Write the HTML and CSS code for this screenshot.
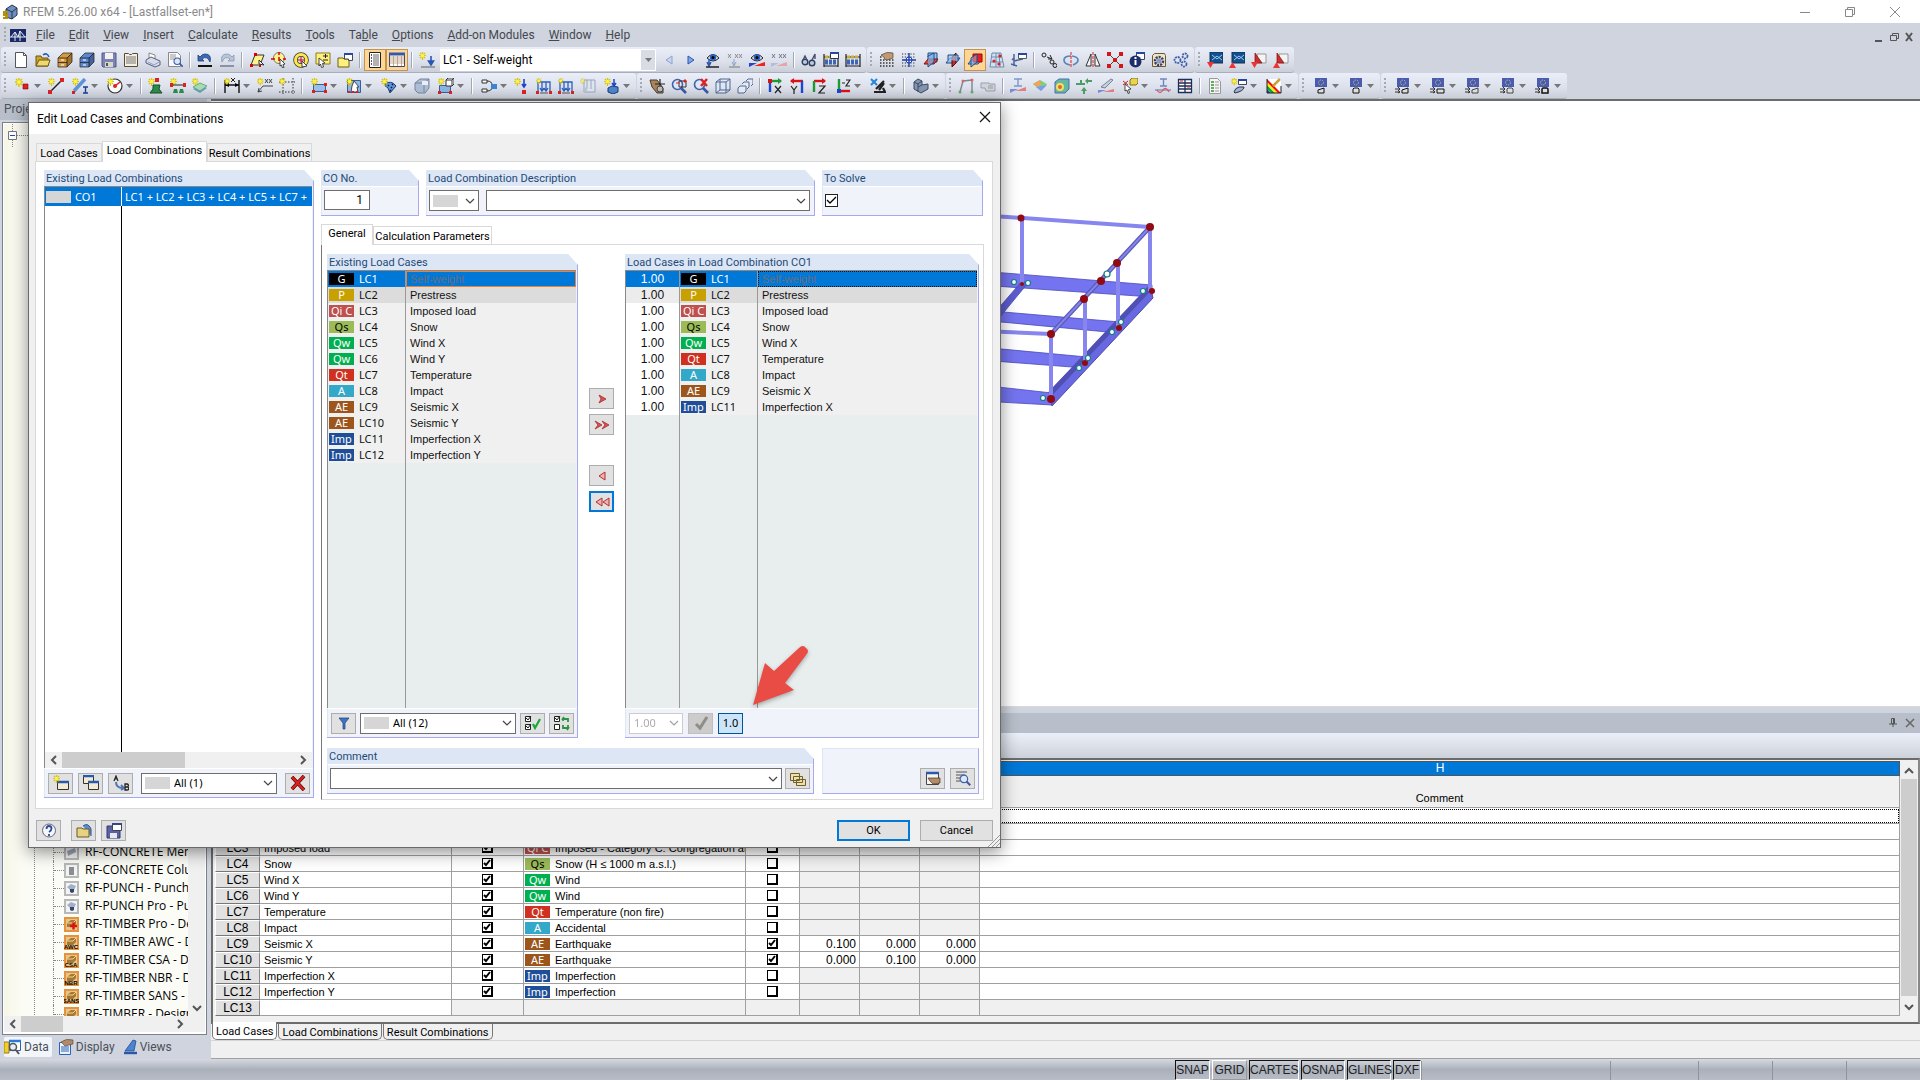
FILE: index.html
```
<!DOCTYPE html>
<html lang="en">
<head>
<meta charset="utf-8">
<title>RFEM 5.26.00 x64 - [Lastfallset-en*]</title>
<link rel="stylesheet" href="styles.css">
</head>
<body>
<svg class="defs" aria-hidden="true">
  <symbol id="star" viewBox="0 0 16 16"><path d="M4 0v9M0 4h8M1 1l6 6M7 1l-6 6" stroke="#d8c400" stroke-width="1.4"/><circle cx="4" cy="4" r="2" fill="#fff34a"/></symbol>
  <symbol id="arr" viewBox="0 0 7 4"><path d="M0 0h7L3.500 4z" fill="#777"/></symbol>
  <symbol id="chev" viewBox="0 0 10 6"><path d="M1 1l4 4 4-4" fill="none" stroke="#444" stroke-width="1.200"/></symbol>
  <symbol id="chevL" viewBox="0 0 8 10"><path d="M6 1L2 5l4 4" fill="none" stroke="#555" stroke-width="2"/></symbol>
  <symbol id="chevR" viewBox="0 0 8 10"><path d="M2 1l4 4-4 4" fill="none" stroke="#555" stroke-width="2"/></symbol>
  <symbol id="chevU" viewBox="0 0 10 8"><path d="M1 6l4-4 4 4" fill="none" stroke="#555" stroke-width="2"/></symbol>
  <symbol id="chevD" viewBox="0 0 10 8"><path d="M1 2l4 4 4-4" fill="none" stroke="#555" stroke-width="2"/></symbol>
  <symbol id="cabinet" viewBox="0 0 16 16"><path d="M1 6l5-5h9v9l-5 5H1z" fill="currentColor" stroke="#333" stroke-width=".8"/><path d="M1 6h9v9M10 6l5-5M1 10.500h9" fill="none" stroke="#222" stroke-width=".8"/><path d="M10 6l5-5v9l-5 5z" fill="#000" opacity=".25"/><path d="M4 8h3M4 13h3" stroke="#fff" stroke-width="1.200"/></symbol>
  <symbol id="plane" viewBox="0 0 16 16"><path d="M1 9l4-4h10l-4 5z" fill="#9cc4ee" stroke="#1c4c8c"/><path d="M5 12V5l6-4v8z" fill="#7fb0e6" stroke="#1c4c8c"/></symbol>
  <symbol id="lens" viewBox="0 0 16 16"><circle cx="6.500" cy="6.500" r="5" fill="#dce8fa" stroke="#4060a8" stroke-width="1.600"/><path d="M10 10l5 5" stroke="#3a58a8" stroke-width="2.600"/></symbol>
  <symbol id="eye" viewBox="0 0 16 16"><path d="M2 6q6-7 12 0-6 6-12 0z" fill="#dce6f4" stroke="#222"/><circle cx="8" cy="5.500" r="3.200" fill="#2c64c0"/><circle cx="8" cy="5.500" r="1.500" fill="#000"/></symbol>
  <symbol id="loadframe" viewBox="0 0 16 16"><path d="M2 14V4h12v10M6 4v8M10 4v8M4 10l2 3 2-3M8 10l2 3 2-3" fill="none" stroke="#2b60c0" stroke-width="1.300"/><path d="M4 15h8" stroke="#555"/><path d="M0 13h3v3H0zM13 13h3v3h-3z" fill="#d22"/></symbol>
  <symbol id="abacus" viewBox="0 0 16 16"><path d="M1 2v13M15 2v13M1 14h14M1 5h14" stroke="#222" stroke-width="1.200"/><path d="M2 10h12" stroke="#3c66bc" stroke-width="5" stroke-dasharray="3 1"/><path d="M2 5h12" stroke="#c9ae3a" stroke-width="3" stroke-dasharray="3 1"/></symbol>
  <symbol id="screen" viewBox="0 0 16 16"><path d="M2 0h12v9H2z" fill="#4b5cb0"/><circle cx="8" cy="4.500" r="2.500" fill="none" stroke="#b3b98a" stroke-dasharray="1.500 1"/></symbol>
  <symbol id="modwin" viewBox="0 0 16 16"><path d="M3 0h13v11H3z" fill="#14508c" stroke="#0c3058"/><path d="M5 3l5 4 5-4M5 8l5-4 5 4" stroke="#9cc8ee" fill="none"/></symbol>
  <symbol id="addin" viewBox="0 0 16 16"><path d="M6 2h9v9H6z" fill="#f4f4f4" stroke="#999"/><path d="M4 1l7 10H4z" fill="#d02c2c" stroke="#801010" stroke-width=".7"/></symbol>
  <symbol id="wind" viewBox="0 0 16 16"><path d="M0 11h5M0 14h5M3 9l2 2-2 2M3 12l2 2-2 1" stroke="#333" fill="none"/></symbol>
  <symbol id="tb-box" viewBox="0 0 15 15"><path d="M1 1h13v13H1z" fill="#e3c590" stroke="#e6923a" stroke-width="2"/><path d="M3 6l4-3h5v4l-3 3H3z" fill="#a8772c"/><path d="M3 6h6l3-3" stroke="#f1d69c" fill="none"/></symbol>
  <symbol id="gy-box" viewBox="0 0 15 15"><path d="M1 1h13v13H1z" fill="#f3f3f3" stroke="#b8b8b8" stroke-width="2"/></symbol>
</svg>

<div class="app">
<header class="titlebar">
  <svg width="16" height="16" viewBox="0 0 16 16"><path d="M4 5l6-4 5 3v7l-5 4-6-2z" fill="#6f8fc0" stroke="#26364f"/><path d="M4 5l6 3v7M10 8l5-4" fill="none" stroke="#26364f"/><path d="M6 8H2v3h3v3H1" fill="none" stroke="#b98e00" stroke-width="2"/></svg>
  <h1>RFEM 5.26.00 x64 - [Lastfallset-en*]</h1>
  <div class="winctl">
    <button><svg width="12" height="12"><path d="M1 6.500h10" stroke="#888"/></svg></button>
    <button><svg width="12" height="12"><path d="M1.500 3.500h7v7h-7zM3.500 3.500v-2h7v7h-2" fill="none" stroke="#888"/></svg></button>
    <button><svg width="12" height="12"><path d="M1 1l10 10M11 1L1 11" stroke="#888"/></svg></button>
  </div>
</header>

<nav class="menubar">
  <i class="grip"></i>
  <svg class="logo" width="16" height="13" viewBox="0 0 16 13"><path d="M0 0h16v13H0z" fill="#1a2a66"/><path d="M0 8h16M1 8l4-5 3 5 2-6 5 6M5 3v9M10 2v10" stroke="#e6ebf7" fill="none"/></svg>
  <a href="#"><u>F</u>ile</a><a href="#"><u>E</u>dit</a><a href="#"><u>V</u>iew</a><a href="#"><u>I</u>nsert</a><a href="#"><u>C</u>alculate</a><a href="#"><u>R</u>esults</a><a href="#"><u>T</u>ools</a><a href="#">Ta<u>b</u>le</a><a href="#"><u>O</u>ptions</a><a href="#"><u>A</u>dd-on Modules</a><a href="#"><u>W</u>indow</a><a href="#"><u>H</u>elp</a>
  <div class="mdictl">
    <svg width="40" height="12" viewBox="0 0 40 12"><path d="M1 10h7" stroke="#555" stroke-width="2"/><path d="M16.500 4.500h6v5h-6zM18.500 4.500v-2h6v5h-2" fill="none" stroke="#555"/><path d="M32 2l6 8M38 2l-6 8" stroke="#555" stroke-width="2"/></svg>
  </div>
</nav>

<div class="toolrow">
 <div class="bar"><i class="grip"></i>
  <button><svg viewBox="0 0 16 16"><path d="M2.500.500h8l3 3v12h-11z" fill="#fff" stroke="#555"/><path d="M10.500.500v3h3" fill="none" stroke="#555"/></svg></button>
  <button><svg viewBox="0 0 16 16"><path d="M1 14V4h5l1 2h6v8z" fill="#c9a52c" stroke="#6b5610"/><path d="M1 14l3-6h11l-2 6z" fill="#f0d870" stroke="#6b5610"/><path d="M8 3q4-3 6 2" stroke="#2a5ab0" fill="none" stroke-width="1.500"/></svg></button>
  <button><svg viewBox="0 0 16 16" color="#d69a3c"><use href="#cabinet"/></svg></button>
  <button><svg viewBox="0 0 16 16" color="#5b86d4"><use href="#cabinet"/></svg></button>
  <button><svg viewBox="0 0 16 16"><path d="M1 1h14v14H2l-1-1z" fill="#7d84b4" stroke="#55598a"/><path d="M4 1h8v6H4z" fill="#f2f2f2"/><path d="M4 10h8v5H4z" fill="#d4d8c8"/><path d="M6 11v3" stroke="#555" stroke-width="2"/></svg></button>
  <button><svg viewBox="0 0 16 16"><path d="M1.500 1.500h4l1 1h2l1-1h5v13h-13z" fill="#f4efe2" stroke="#5c4a30"/><path d="M3 5h10M3 7h10M3 9h10M3 11h10" stroke="#777"/></svg></button>
  <button><svg viewBox="0 0 16 16"><path d="M4 1l6 2v5l-6-2z" fill="#fff" stroke="#888"/><path d="M1 8l5-3 9 4v4l-5 2-9-4z" fill="#d9dbe6" stroke="#555f80"/><path d="M3 10l6 3 5-3" stroke="#8fa0c8" fill="none"/></svg></button>
  <button><svg viewBox="0 0 16 16"><path d="M1.500.500h9l3 3v11h-12z" fill="#fafafa" stroke="#888"/><path d="M3 3h6M3 5h6M3 7h4" stroke="#999"/><g transform="translate(6 5) scale(.65)"><use href="#lens" width="16" height="16"/></g></svg></button>
  <i class="sep"></i>
  <button><svg viewBox="0 0 16 16"><path d="M1 3v6h6L5 7q5-4 8 3 2-8-5-8Q5 2 3 5z" fill="#3a6ab4" stroke="#1c3f78" stroke-width=".8"/><path d="M1 14h14" stroke="#111" stroke-width="2"/></svg></button>
  <button><svg viewBox="0 0 16 16"><path d="M15 3v6H9l2-2Q6 3 3 10 1 2 8 2q3 0 5 3z" fill="#b8c4d8" stroke="#8895ae" stroke-width=".8"/><path d="M1 14h14" stroke="#8a93a5" stroke-width="2"/></svg></button>
  <i class="sep"></i>
  <button><svg viewBox="0 0 16 16"><path d="M2 13L6 3h9l-4 10z" fill="#fff48c" stroke="#333"/><path d="M1 12h3v3H1zM5 1h3v3H5zM10 13h2v2h-2z" fill="#d00"/><path d="M10 8l5 5-5-1z" fill="#fff" stroke="#333"/></svg></button>
  <button><svg viewBox="0 0 16 16"><circle cx="8" cy="6" r="5.500" fill="#fff48c" stroke="#777"/><path d="M0 7h4M12 7h3M8 0v3M8 5v4" stroke="#d00" stroke-width="1.500"/><path d="M9 7l5 5-2 .5 1 3-1.500.5-1-3L9 14z" fill="#fff" stroke="#222" stroke-width=".8"/></svg></button>
  <button><svg viewBox="0 0 16 16"><circle cx="8" cy="8" r="5.500" fill="none" stroke="#333" stroke-width="4.500"/><circle cx="8" cy="8" r="5.500" fill="none" stroke="#ffe84a" stroke-width="3"/><path d="M5 8h6M8 5v6" stroke="#d00"/><path d="M9 9l5 5-5 1z" fill="#fff" stroke="#222" stroke-width=".8"/></svg></button>
  <button><svg viewBox="0 0 16 16"><path d="M1 1h14v11H1z" fill="#fff07c" stroke="#8a7a20"/><path d="M8 4h5M10.500 2v4M8 8h5" stroke="#222"/><path d="M4 6l6 5-2.500.5 1 3.500-2 .5-1-3.500L4 14z" fill="#fff" stroke="#222" stroke-width=".8"/></svg></button>
  <button><svg viewBox="0 0 16 16"><path d="M1 6h5l1 1h5v8H1z" fill="#fff07c" stroke="#6d6115"/><path d="M7.500 1.500h8v7h-4V7h-4z" fill="#fff" stroke="#445"/><path d="M7 2h9" stroke="#2848a0" stroke-width="2"/></svg></button>
  <i class="sep"></i>
  <button class="on"><svg viewBox="0 0 16 16"><path d="M2.500.500h11v15h-11z" fill="#fff" stroke="#222"/><path d="M4 3h1M4 6h1M4 9h1M4 12h1" stroke="#224" stroke-width="1.500"/><path d="M6 3h6M6 5h6M6 7h6M6 9h6M6 11h6M6 13h6" stroke="#666"/></svg></button>
  <button class="on"><svg viewBox="0 0 16 16"><path d="M.500 1.500h15v13H.500z" fill="#fff" stroke="#3a4a70"/><path d="M0 2h16" stroke="#3558a8" stroke-width="3"/><path d="M1 5h14M1 7h14M1 9h14M1 11h14M4.500 4v10M8.500 4v10M12.500 4v10" stroke="#b08a70" stroke-width=".7"/></svg></button>
  <i class="sep"></i>
  <button><svg viewBox="0 0 16 16"><use href="#star" width="14" height="14"/><path d="M12 4v8M9.500 9l2.500 4 2.500-4z" stroke="#2a56b4" fill="#2a56b4" stroke-width="1.600"/><path d="M2 15h14" stroke="#888" stroke-width="1.500"/></svg></button>
  <div class="lcselect"><select aria-label="Load case"><option>LC1 - Self-weight</option></select><span><svg width="7" height="4"><use href="#arr"/></svg></span></div>
  <button><svg viewBox="0 0 16 16"><path d="M11 4v8L5 8z" fill="#c8d6f0" stroke="#8ea4d0"/></svg></button>
  <button><svg viewBox="0 0 16 16"><path d="M5 4v8l6-4z" fill="#7fa6e8" stroke="#2a56b4"/></svg></button>
  <button><svg viewBox="0 0 16 16"><use href="#eye" width="16" height="16"/><path d="M4 7v6M2 10l2 4 2-4" stroke="#2a56b4" fill="none" stroke-width="1.500"/><path d="M1 15h13" stroke="#222" stroke-width="1.500"/></svg></button>
  <button><svg viewBox="0 0 16 16"><path d="M1 2l3 4M4 2L1 6M8 2l3 4M11 2L8 6M12 2l3 4M15 2l-3 4" stroke="#8a8d96"/><path d="M7 7v6M5 10l2 4 2-4" stroke="#8fa3c9" fill="none"/><path d="M2 15h11" stroke="#999" stroke-width="1.500"/></svg></button>
  <button><svg viewBox="0 0 16 16"><use href="#eye" width="16" height="16"/><path d="M0 15v-4h8z" fill="#24c"/><path d="M16 10v4H5z" fill="#e22"/></svg></button>
  <button><svg viewBox="0 0 16 16"><path d="M1 2l3 4M4 2L1 6M8 2l3 4M11 2L8 6M12 2l3 4M15 2l-3 4" stroke="#777a84"/><path d="M0 15v-4h8z" fill="#b4bcdc"/><path d="M16 10v4H5z" fill="#e8a4a8"/></svg></button>
  <i class="sep"></i>
  <button><svg viewBox="0 0 16 16"><circle cx="4" cy="10" r="2.800" fill="#b8cbe6" stroke="#333d55" stroke-width="1.400"/><circle cx="11" cy="11" r="2.800" fill="#b8cbe6" stroke="#333d55" stroke-width="1.400"/><path d="M2 8l2-4 2 4M11 8l3-6v5" stroke="#45506a" fill="none" stroke-width="1.400"/></svg></button>
  <button><svg viewBox="0 0 16 16"><use href="#abacus" width="16" height="16"/><path d="M7.500.500h8v6h-8z" fill="#fff" stroke="#333"/><path d="M7 1h9" stroke="#2848a0" stroke-width="2"/></svg></button>
  <button><svg viewBox="0 0 16 16"><use href="#abacus" width="16" height="16"/></svg></button>
 </div>
 <div class="bar"><i class="grip"></i>
  <button><svg viewBox="0 0 16 16"><path d="M1 8h14M1 11h14M1 14h14M1 5h3" stroke="#333" stroke-width="1.500" stroke-dasharray="1.500 1.500"/><path d="M2 3q6-4 12-2v5l-6 2q-3 0-3-3z" fill="#c09a74" stroke="#5c4632" stroke-width=".7"/></svg></button>
  <button><svg viewBox="0 0 16 16"><path d="M1 2h14M1 5h14M1 11h14M1 14h14" stroke="#333" stroke-width="1.200" stroke-dasharray="1.200 1.600"/><circle cx="8" cy="8" r="3" fill="#fff" stroke="#1a3fb0"/><path d="M8 1v14M1 8h14" stroke="#1a3fb0" stroke-width="1.400"/></svg></button>
  <button><svg viewBox="0 0 16 16"><path d="M5 5V1h9v9h-3" fill="#9cc4ee" stroke="#1c4c8c"/><path d="M1 12l4-5h10l-4 5z" fill="#d84848" stroke="#7a1010"/><path d="M5 7V4l6-3v9l-6 5v-3" fill="#7fb0e6" fill-opacity=".7" stroke="#1c4c8c"/></svg></button>
  <button><svg viewBox="0 0 16 16"><path d="M1 11l4-5h10l-4 5z" fill="#9cc4ee" stroke="#1c4c8c"/><path d="M7 15V5l4-4v10z" fill="#b03434" stroke="#600"/><path d="M3 8V3h10v6" fill="#9cc4ee" fill-opacity=".7" stroke="#1c4c8c"/></svg></button>
  <button class="on"><svg viewBox="0 0 16 16"><path d="M1 12l4-5h10l-4 5z" fill="#9cc4ee" stroke="#1c4c8c"/><path d="M6 2h9v8H6z" fill="#e22020" stroke="#a00"/><path d="M4 15V6l6-4v8z" fill="#9cc4ee" fill-opacity=".5" stroke="#1c4c8c"/></svg></button>
  <button><svg viewBox="0 0 16 16"><path d="M3 1h9l3 14H1zM2 5h11M2 10h12M7 1v14M10 1l1 14" fill="#cfe1f3" stroke="#6f8cae"/><circle cx="5" cy="9" r="1.600" fill="#d22"/><circle cx="11" cy="4" r="1.600" fill="#d22"/><circle cx="10" cy="12" r="1.600" fill="#d22"/></svg></button>
  <button><svg viewBox="0 0 16 16"><path d="M3 2v12M3 9l9-2M0 12l6 2M3 6l-2 2" stroke="#48639a" fill="none" stroke-width="1.500"/><path d="M7.500 1.500h8v5h-8z" fill="#fff" stroke="#556"/><path d="M7 2h9" stroke="#2848a0" stroke-width="2"/></svg></button>
  <i class="sep"></i>
  <button><svg viewBox="0 0 16 16"><circle cx="3" cy="3" r="2" fill="none" stroke="#222"/><circle cx="11" cy="10" r="2" fill="none" stroke="#222"/><circle cx="14" cy="13.500" r="2" fill="none" stroke="#222"/><path d="M6 5l5 2M9 3l2 4-4 0" stroke="#222" fill="none"/></svg></button>
  <button><svg viewBox="0 0 16 16"><path d="M8 4Q1 4 1 8t6 5M9 4q6 1 6 4t-5 5" fill="none" stroke="#5c84bc" stroke-width="1.700"/><path d="M8 0v16" stroke="#d22" stroke-dasharray="3 1"/></svg></button>
  <button><svg viewBox="0 0 16 16"><path d="M6 2v12H1zM10 2v12h5z" fill="#f4f4f4" stroke="#333"/><path d="M8 0v16" stroke="#d22" stroke-dasharray="3 1"/></svg></button>
  <button><svg viewBox="0 0 16 16"><path d="M2 2l12 12M14 2L2 14" stroke="#444"/><path d="M0 0h4v4H0zM12 0h4v4h-4zM0 12h4v4H0zM12 12h4v4h-4zM6 6h4v4H6z" fill="#d01818"/></svg></button>
  <button><svg viewBox="0 0 16 16"><path d="M7.500.500h8v7h-8z" fill="#fff" stroke="#445"/><path d="M7 1h9" stroke="#2848a0" stroke-width="2"/><circle cx="6.500" cy="9.500" r="6" fill="#1c2c6c"/><path d="M6.500 5v2M6.500 8v5" stroke="#fff" stroke-width="2"/></svg></button>
  <button><svg viewBox="0 0 16 16"><path d="M1.500 3.500l2-2h10l1 2v11h-13z" fill="#f1e2c4" stroke="#6b5a3a"/><circle cx="8" cy="9" r="4" fill="none" stroke="#333f66" stroke-width="2.500" stroke-dasharray="2 1"/><circle cx="8" cy="9" r="2.500" fill="#8a9ac8"/></svg></button>
  <button><svg viewBox="0 0 16 16"><g fill="#dfe7fa" stroke="#4060a8" stroke-width="1.800" stroke-dasharray="2 .8"><circle cx="4.500" cy="8" r="3"/><circle cx="12" cy="4" r="2.500"/><circle cx="11" cy="12" r="2.500"/></g></svg></button>
 </div>
 <div class="bar"><i class="grip"></i>
  <button><svg viewBox="0 0 16 16"><use href="#modwin" width="16" height="16"/><path d="M0 10h7l-3.500 6z" fill="#e33"/></svg></button>
  <button><svg viewBox="0 0 16 16"><use href="#modwin" width="16" height="16"/><path d="M0 16h7l-3.500-6z" fill="#e33"/></svg></button>
  <button><svg viewBox="0 0 16 16"><use href="#addin" width="16" height="16"/><path d="M0 10h7l-3.500 6z" fill="#e33"/></svg></button>
  <button><svg viewBox="0 0 16 16"><use href="#addin" width="16" height="16"/><path d="M0 16h7l-3.500-6z" fill="#e33"/></svg></button>
 </div>
</div>

<div class="toolrow">
 <div class="bar"><i class="grip"></i>
  <button class="split"><svg viewBox="0 0 16 16"><use href="#star" width="16" height="16"/><path d="M8 6h5v5H8z" fill="#d22" stroke="#800" stroke-width=".6"/></svg><svg class="dd"><use href="#arr"/></svg></button>
  <button><svg viewBox="0 0 16 16"><use href="#star" width="14" height="14"/><path d="M2 14L14 2" stroke="#222" stroke-width="1.500"/><path d="M0 12h4v4H0zM12 0h4v4h-4z" fill="#d22"/></svg></button>
  <button class="split"><svg viewBox="0 0 16 16"><path d="M2 13L13 1" stroke="#5c94d8" stroke-width="3.500"/><use href="#star" width="14" height="14"/><path d="M0 13h3v3H0z" fill="#d22"/><path d="M11 9h5M13.500 9v6M11 15h5" stroke="#1a3f98" stroke-width="1.400"/></svg><svg class="dd"><use href="#arr"/></svg></button>
  <button class="split"><svg viewBox="0 0 16 16"><circle cx="8" cy="8" r="7" fill="#fdfdfd" stroke="#333" stroke-width="1.200"/><use href="#star" width="14" height="14"/><path d="M8 8l5-4" stroke="#d22" stroke-width="1.600"/><circle cx="8" cy="8" r="2" fill="#d22"/></svg><svg class="dd"><use href="#arr"/></svg></button>
  <i class="sep"></i>
  <button><svg viewBox="0 0 16 16"><use href="#star" width="14" height="14"/><path d="M7 0h4v4H7z" fill="#d22"/><path d="M5 7h7l-1 4 3 4H2l3-4z" fill="#2c8c4c" stroke="#145028"/></svg></button>
  <button><svg viewBox="0 0 16 16"><use href="#star" width="14" height="14"/><path d="M2 7h12" stroke="#222"/><path d="M0 5h3v4H0zM13 5h3v4h-3z" fill="#d22"/><path d="M3 15l1-4h3l1 4zM9 15l1-4h3l1 4z" fill="#2c8c4c"/></svg></button>
  <button><svg viewBox="0 0 16 16"><path d="M1 11l7-4 7 3-7 5z" fill="#5f9ec4"/><path d="M1 9l7-4 7 3-7 5z" fill="#a8dcb0" stroke="#6aa884"/><use href="#star" width="13" height="13"/></svg></button>
  <i class="sep"></i>
  <button class="split"><svg viewBox="0 0 16 16"><path d="M1 2v13M15 2v13M1 7h14" stroke="#111" stroke-width="1.400"/><path d="M5 5L1 7l4 2zM11 5l4 2-4 2z"/><use href="#star" width="12" height="12"/><path d="M7 0l4 4M11 0L7 4" stroke="#222"/></svg><svg class="dd"><use href="#arr"/></svg></button>
  <button><svg viewBox="0 0 16 16"><path d="M1 14L6 8h10M1 14l1-4M1 14l4-1" stroke="#444" fill="none"/><use href="#star" width="13" height="13"/><path d="M8 1l3 4M11 1L8 5M12 1l3 4M15 1l-3 4" stroke="#444"/></svg></button>
  <button><svg viewBox="0 0 16 16"><path d="M4 0v16M14 0v16M0 4h16M0 14h16" stroke="#333" stroke-dasharray="1.500 1.500"/><use href="#star" width="13" height="13"/></svg></button>
  <i class="sep"></i>
  <button class="split"><svg viewBox="0 0 16 16"><path d="M2.500 6.500h12v7h-12z" fill="#9cc0ea" stroke="#3a5f94"/><path d="M1 12h3v3H1zM13 12h3v3h-3zM13 5h3v3h-3z" fill="#d22"/><use href="#star" width="14" height="14"/></svg><svg class="dd"><use href="#arr"/></svg></button>
  <button class="split"><svg viewBox="0 0 16 16"><path d="M1.500 2.500h13v12h-13z" fill="#8fb8e6" stroke="#3a5f94"/><use href="#star" width="14" height="14"/><path d="M8 3l5 6-2 0 1 5H5l1-6z" fill="#fff" stroke="#445"/><path d="M2 14h12" stroke="#d22" stroke-dasharray="2 2" stroke-width="2"/></svg><svg class="dd"><use href="#arr"/></svg></button>
  <button class="split"><svg viewBox="0 0 16 16"><path d="M3 7Q10 1 15 8l-6 7Q8 9 3 7z" fill="#5c94d8" stroke="#1e3f78"/><use href="#star" width="14" height="14"/><path d="M7 7l1 1M10 9l1 1M11 6l1 1M9 12l1 1" stroke="#113" stroke-width="1.500"/></svg><svg class="dd"><use href="#arr"/></svg></button>
  <button><svg viewBox="0 0 16 16"><path d="M1 5l5-4h9v9l-4 5H4l-3-3z" fill="#aebdd6" stroke="#76849e"/><path d="M1 5h9v9M10 5l5-4" fill="none" stroke="#76849e"/><path d="M8 3h6v4H8z" fill="#e9edf5"/></svg></button>
  <button class="split"><svg viewBox="0 0 16 16"><path d="M1.500 7.500h11v7h-11z" fill="#8ab4e4" stroke="#3a5f94"/><path d="M8 2l2-2h6v6l-2 2H8zM8 2h6v6M14 2l2-2" fill="#fff" stroke="#333"/><path d="M0 13h3v3H0zM11 13h3v3h-3z" fill="#d22"/><use href="#star" width="13" height="13"/></svg><svg class="dd"><use href="#arr"/></svg></button>
  <i class="sep"></i>
  <button class="split"><svg viewBox="0 0 16 16"><path d="M1 2h5v3H1zM1 11h5v3H1z" fill="#fff" stroke="#333"/><path d="M6 3q5 0 5 4M6 13q5 0 5-4" stroke="#333" fill="none"/><path d="M10 6h6v5h-6z" fill="#3a86d4"/></svg><svg class="dd"><use href="#arr"/></svg></button>
  <button><svg viewBox="0 0 16 16"><use href="#star" width="14" height="14"/><path d="M10 1v7M8 6l2 3 2-3" stroke="#24c" stroke-width="1.600" fill="none"/><path d="M8 12h4v4H8z" fill="#d22"/></svg></button>
  <button><svg viewBox="0 0 16 16"><use href="#loadframe" width="16" height="16"/><use href="#star" width="11" height="11"/></svg></button>
  <button><svg viewBox="0 0 16 16"><use href="#loadframe" width="16" height="16"/><use href="#star" width="11" height="11"/></svg></button>
  <button><svg viewBox="0 0 16 16"><path d="M4 2h11v12H4zM7 2v9M11 2v9" fill="#dfe5ee" stroke="#98a6bc"/><path d="M2 14l3-5 3 5z" fill="#b8c4d6"/><use href="#star" width="11" height="11" opacity=".7"/></svg></button>
  <button class="split"><svg viewBox="0 0 16 16"><use href="#star" width="14" height="14"/><path d="M4 10l4-2 6 1v5l-5 2-5-2z" fill="#4c84cc" stroke="#1c3c70"/><path d="M10 1v7M8 5l2 3 2-3" stroke="#24c" fill="none" stroke-width="1.500"/></svg><svg class="dd"><use href="#arr"/></svg></button>
 </div>
 <div class="bar"><i class="grip"></i>
  <button><svg viewBox="0 0 16 16"><path d="M1 2l7 0 6 8v5H8L3 9z" fill="#a8845c" stroke="#4a3a28"/><path d="M11 1v13M6 6h10" stroke="#222" stroke-width="1.200"/><circle cx="11" cy="11" r="3" fill="#bbb" stroke="#444"/></svg></button>
  <button><svg viewBox="0 0 16 16"><use href="#lens" width="16" height="16"/><path d="M8 3h7v6H8z" fill="none" stroke="#333"/><path d="M5 5h4M13 2h2v2h-2z" stroke="#d22" fill="#d22"/></svg></button>
  <button><svg viewBox="0 0 16 16"><use href="#lens" width="16" height="16"/><path d="M8 1l6 7M14 1L8 8" stroke="#d22" stroke-width="2.400"/></svg></button>
  <button><svg viewBox="0 0 16 16"><path d="M1 4l4-3h10v11l-4 3H1zM1 4h10v11M11 4l4-3M5 1v11h10M5 12l-4 3" fill="#dce6f4" stroke="#54698f"/></svg></button>
  <button><svg viewBox="0 0 16 16"><path d="M1 10l2-2h6v5l-2 2H1zM5 6l2-2h5v5l-2 2M9 3l2-2h5v5l-2 2" fill="#e4ebf6" stroke="#54698f"/></svg></button>
  <i class="sep"></i>
  <button><svg viewBox="0 0 16 16"><path d="M3 3h11" stroke="#1c9c30" stroke-width="2.400"/><path d="M3 3v11" stroke="#1a48d0" stroke-width="2.400"/><path d="M1 1h4v4H1z" fill="#d11"/><path d="M11 0l4 3-4 3z" fill="#1c9c30"/><path d="M8 8l6 7M14 8l-6 7" stroke="#222" stroke-width="1.200"/></svg></button>
  <button><svg viewBox="0 0 16 16"><path d="M2 3h12" stroke="#d11" stroke-width="2.400"/><path d="M13 3v12" stroke="#1a48d0" stroke-width="2.400"/><path d="M5 0L1 3l4 3z" fill="#d11"/><path d="M2 8l3 4 3-4M5 12v4" stroke="#222" stroke-width="1.200" fill="none"/></svg></button>
  <button><svg viewBox="0 0 16 16"><path d="M3 3h11" stroke="#d11" stroke-width="2.400"/><path d="M3 3v11" stroke="#1c9c30" stroke-width="2.400"/><path d="M11 0l4 3-4 3z" fill="#d11"/><path d="M8 8h6l-6 7h6" stroke="#222" stroke-width="1.200" fill="none"/></svg></button>
  <button class="split"><svg viewBox="0 0 16 16"><path d="M4 1v12" stroke="#1c9c30" stroke-width="2.400"/><path d="M4 13h11" stroke="#d11" stroke-width="2.400"/><path d="M2 11h4v4H2z" fill="#1a48d0"/><path d="M7 5h3M11 2h4l-4 6h4" stroke="#222" fill="none" stroke-width="1.200"/></svg><svg class="dd"><use href="#arr"/></svg></button>
  <button class="split"><svg viewBox="0 0 16 16"><path d="M1 1l6 6M7 1L1 7" stroke="#2484d8" stroke-width="2"/><path d="M4 14h11l-2-4M6 11L14 3M9 12l5-7" stroke="#222" stroke-width="2.200" fill="none"/></svg><svg class="dd"><use href="#arr"/></svg></button>
  <i class="sep"></i>
  <button class="split"><svg viewBox="0 0 16 16"><path d="M1 4l4-3 4 2v4l6-1v5l-7 4-7-4z" fill="#8495b0" stroke="#3c4a62"/><path d="M1 4l4 2v8M5 6l4-3M9 7l-4 2" stroke="#3c4a62" fill="none"/></svg><svg class="dd"><use href="#arr"/></svg></button>
 </div>
 <div class="bar"><i class="grip"></i>
  <button><svg viewBox="0 0 16 16"><path d="M2 14L5 3l9-1v11" stroke="#7c8494" fill="none" stroke-width="1.400"/><circle cx="5" cy="3" r="1.500" fill="#d66"/><circle cx="14" cy="2" r="1.500" fill="#d66"/><circle cx="2" cy="14" r="1.500" fill="#6a6"/><circle cx="14" cy="14" r="1.500" fill="#6a6"/></svg></button>
  <button><svg viewBox="0 0 16 16"><path d="M1 5h8l1 1h5v7H6L5 10H1z" fill="#d0d4dc" stroke="#9a9fac"/><path d="M8 8h5M8 10h5" stroke="#999"/></svg></button>
  <i class="sep"></i>
  <button><svg viewBox="0 0 16 16"><path d="M4 1h8M8 1v7M4 8h8" stroke="#7e98c6" stroke-width="1.400"/><path d="M0 15v-4h8z" fill="#7c8cd4"/><path d="M16 9v4H5z" fill="#e47c80"/></svg></button>
  <button><svg viewBox="0 0 16 16"><path d="M1 6l7-4 7 4-6 7z" fill="#7fd07c"/><path d="M1 6l7-4 1 5-3 2z" fill="#f0a060"/><path d="M4 9l5 4 6-6z" fill="#7c9cec"/></svg></button>
  <button><svg viewBox="0 0 16 16"><path d="M1 4l4-3h10v10l-4 4H1z" fill="#64b8a0" stroke="#4c6cac"/><circle cx="6" cy="9" r="4" fill="#f0e060"/><circle cx="6" cy="9" r="2" fill="#e06040"/></svg></button>
  <button><svg viewBox="0 0 16 16"><path d="M0 6h9M5 2v5M10 3h6M8 10v6" stroke="#4c9c64" stroke-width="2"/><path d="M12 0L9 3l3 3zM5 13l3-4 3 4z" fill="#4c9c64"/></svg></button>
  <button><svg viewBox="0 0 16 16"><path d="M3 9L13 1l2 1-8 8z" fill="#c8d0dc" stroke="#74809a"/><path d="M0 15v-3h8z" fill="#7c8cd4"/><path d="M16 11v3H5z" fill="#e47c80"/></svg></button>
  <button class="split"><svg viewBox="0 0 16 16"><path d="M8 2l2-2h6v5l-2 2H8z" fill="#e9d44c" stroke="#7d6e14"/><path d="M1 3l5 4M6 3L1 7" stroke="#c22"/><path d="M3 6l6 5-2.500.5 1 3.500-1.500.5-1-3.500L3 13z" fill="#fff" stroke="#222" stroke-width=".8"/></svg><svg class="dd"><use href="#arr"/></svg></button>
  <button><svg viewBox="0 0 16 16"><path d="M5 1h7M8.500 1v7M5 8h7" stroke="#6d88ba" stroke-width="1.400"/><path d="M0 12h16" stroke="#6070c0"/><path d="M2 12q3 5 6 0 3-4 6 2" stroke="#d55" fill="none" stroke-width="1.300"/></svg></button>
  <button><svg viewBox="0 0 16 16"><path d="M1.500 1.500h13v13h-13zM1 5h14M1 8h14M1 11h14M8 1v14" fill="#fff" stroke="#1e2e58" stroke-width="1.300"/><path d="M3 3h3M10 9h3" stroke="#d22"/></svg></button>
  <i class="sep"></i>
  <button><svg viewBox="0 0 16 16"><path d="M2.500.500h8l3 3v12h-11z" fill="#f4f4f4" stroke="#999"/><path d="M4 4h3M4 7h3M4 10h3M4 13h3" stroke="#6a6" stroke-width="2"/><path d="M8 4h4M8 7h4M8 10h4M8 13h4" stroke="#999"/></svg></button>
  <button class="split"><svg viewBox="0 0 16 16"><path d="M7.500 1.500h8v5h-8z" fill="#fff" stroke="#445"/><path d="M7 2h9" stroke="#2848a0" stroke-width="2"/><path d="M3 14q1-4 5-5l5 0q0 4-9 6z" fill="#a0b0d4" stroke="#334"/><use href="#star" width="13" height="13"/></svg><svg class="dd"><use href="#arr"/></svg></button>
  <button class="split"><svg viewBox="0 0 16 16"><path d="M1 1h14v14H1z" fill="#fff"/><path d="M1 11l4 4H1z" fill="#24c"/><path d="M1 7l8 8H5l-4-4z" fill="#1a3"/><path d="M1 4l11 11H9L1 7z" fill="#fe0"/><path d="M1 1l14 14h-3L1 4z" fill="#e11"/><path d="M7 8L14 1" stroke="#c9a23c" stroke-width="2.500"/><path d="M1 1v14h14V8" fill="none" stroke="#222"/></svg><svg class="dd"><use href="#arr"/></svg></button>
 </div>
 <div class="bar"><i class="grip"></i>
  <button class="split"><svg viewBox="0 0 16 16"><use href="#screen" width="16" height="16"/><path d="M5 15v-3l6-2v5z" fill="#dce0dc" stroke="#111"/></svg><svg class="dd"><use href="#arr"/></svg></button>
  <button class="split"><svg viewBox="0 0 16 16"><use href="#screen" width="16" height="16"/><path d="M5 15v-4l1-1h4l1 1v4z" fill="#dce0dc" stroke="#111"/></svg><svg class="dd"><use href="#arr"/></svg></button>
 </div>
 <div class="bar"><i class="grip"></i>
  <button class="split"><svg viewBox="0 0 16 16"><use href="#screen" width="16" height="16"/><use href="#wind" width="16" height="16"/><path d="M7 15v-3l6-2v5z" fill="#dce0dc" stroke="#111"/></svg><svg class="dd"><use href="#arr"/></svg></button>
  <button class="split"><svg viewBox="0 0 16 16"><use href="#screen" width="16" height="16"/><use href="#wind" width="16" height="16"/><path d="M7 15v-4h7v4z" fill="#dce0dc" stroke="#111"/></svg><svg class="dd"><use href="#arr"/></svg></button>
  <button class="split"><svg viewBox="0 0 16 16"><use href="#screen" width="16" height="16"/><use href="#wind" width="16" height="16"/><path d="M7 15v-3l6-2v5z" fill="#dce0dc" stroke="#444"/></svg><svg class="dd"><use href="#arr"/></svg></button>
  <button class="split"><svg viewBox="0 0 16 16"><use href="#screen" width="16" height="16"/><use href="#wind" width="16" height="16"/><path d="M7 15v-4l1-1h4l1 1v4z" fill="#dce0dc" stroke="#444"/></svg><svg class="dd"><use href="#arr"/></svg></button>
  <button class="split"><svg viewBox="0 0 16 16"><use href="#screen" width="16" height="16"/><use href="#wind" width="16" height="16"/><path d="M7 15v-4l1-1h4l1 1v4z" fill="#dce0dc" stroke="#111" stroke-width="1.500"/></svg><svg class="dd"><use href="#arr"/></svg></button>
 </div>
</div>

<main class="workspace">
 <aside class="navigator">
  <h2>Project Navigator</h2>
  <div class="navframe">
   <div class="navtree">
    <div class="treeview">
     <div class="root"><svg width="30" height="24" viewBox="0 0 30 24"><path d="M8.500 0v24M13 11.500h16" stroke="#888" stroke-dasharray="1 1"/><path d="M4.500 7.500h8v8h-8z" fill="#fff" stroke="#777"/><path d="M6 11.500h5" stroke="#24c"/></svg></div>
     <ul>
      <li><svg viewBox="0 0 15 15"><use href="#gy-box"/><path d="M3 6l8-3 1 4-8 4z" fill="#9aa4b4"/></svg><span>RF-CONCRETE Members</span></li>
      <li><svg viewBox="0 0 15 15"><use href="#gy-box"/><path d="M5 4h5v8H5z" fill="#8a8d94"/></svg><span>RF-CONCRETE Columns</span></li>
      <li><svg viewBox="0 0 15 15"><use href="#gy-box"/><path d="M3 6l4-3 5 2-2 4H6z" fill="#a4b0c8"/><path d="M6 8h4v3l-2 1-2-1z" fill="#34466e"/></svg><span>RF-PUNCH - Punching</span></li>
      <li><svg viewBox="0 0 15 15"><use href="#gy-box"/><path d="M3 6l4-3 5 2-2 4H6z" fill="#a4b0c8"/><path d="M6 8h4v3l-2 1-2-1z" fill="#34466e"/></svg><span>RF-PUNCH Pro - Punching</span></li>
      <li><svg viewBox="0 0 15 15"><use href="#tb-box"/><path d="M6 9h7M9.500 5.500v7" stroke="#d11" stroke-width="2.400"/></svg><span>RF-TIMBER Pro - Design</span></li>
      <li><svg viewBox="0 0 15 15"><use href="#tb-box"/><text x="7" y="14">AWC</text></svg><span>RF-TIMBER AWC - Design</span></li>
      <li><svg viewBox="0 0 15 15"><use href="#tb-box"/><text x="7" y="14">CSA</text></svg><span>RF-TIMBER CSA - Design</span></li>
      <li><svg viewBox="0 0 15 15"><use href="#tb-box"/><text x="7" y="14">NBR</text></svg><span>RF-TIMBER NBR - Design</span></li>
      <li><svg viewBox="0 0 15 15"><use href="#tb-box"/><text x="7" y="14">SANS</text></svg><span>RF-TIMBER SANS - Design</span></li>
      <li><svg viewBox="0 0 15 15"><use href="#tb-box"/></svg><span>RF-TIMBER - Design of</span></li>
     </ul>
    </div>
    <div class="vscroll"><svg width="10" height="8"><use href="#chevD"/></svg></div>
   </div>
   <div class="hscroll nav-h"><svg width="8" height="10"><use href="#chevL"/></svg><i></i><svg width="8" height="10"><use href="#chevR"/></svg></div>
  </div>
  <div class="navtabs">
   <button class="cur"><svg width="18" height="16" viewBox="0 0 18 16"><path d="M0 3h5v11H0z" fill="#f4cc30" stroke="#a07c00"/><path d="M5.500 1.500h11v10h-11z" fill="#fff" stroke="#2a62b8"/><path d="M5 2h12" stroke="#2a7ad8" stroke-width="2.500"/><circle cx="9" cy="8" r="3.500" fill="#e4eefc" stroke="#555" stroke-width="1.500"/><path d="M12 11l3 4" stroke="#555" stroke-width="2"/></svg>Data</button>
   <button><svg width="16" height="16" viewBox="0 0 16 16"><path d="M1.500 3.500h11v12h-11z" fill="#eaf2fc" stroke="#2a62b8"/><path d="M3 8h8M3 10h8M3 12h8" stroke="#2a62b8"/><path d="M3 3q5-4 12-2v4l-8 2z" fill="#b08a6a" stroke="#54402c" stroke-width=".6"/></svg>Display</button>
   <button><svg width="14" height="16" viewBox="0 0 14 16"><path d="M9 1l3 1-2 10H1z" fill="#4c84d4" stroke="#1c3f78" stroke-width=".7"/><path d="M0 14h13" stroke="#2a58a8" stroke-width="2.400" fill="none"/></svg>Views</button>
  </div>
 </aside>

 <section class="content">
  <div class="canvas">
   <svg class="model" width="180" height="210" viewBox="1000 210 180 210">
    <g fill="#7474f0" stroke="#4a4ab8" stroke-width=".8">
     <path d="M980 271l172 14v12l-172-12z"/>
     <path d="M980 310l140 12-2 11-138-13z"/>
     <path d="M980 347l107 10-2 11-105-8z"/>
     <path d="M980 385l72 8v12l-72-4z"/>
     <path d="M984 325l38-44 6 2-38 46z" fill="#5c5cd0"/>
    </g>
    <path d="M1050 391l100-105 3 12-101 108z" fill="#6868e2" stroke="#4a4aa8"/>
    <path d="M1050 394l100-106" stroke="#5050b4" stroke-width="5"/>
    <g stroke="#8686ee" stroke-width="4" fill="none"><path d="M980 215l170 12M1150 227v64M1022 218v66M1051 334v64M1085 299v63M1118 263v65M980 331l71 3"/></g>
    <path d="M1150 227L1051 334" stroke="#5858b8" stroke-width="4.500"/>
    <path d="M1150 227L1051 334" stroke="#8484ea" stroke-width="2"/>
    <g fill="#900a14"><circle cx="1021" cy="218" r="3.500"/><circle cx="1150" cy="227" r="4"/><circle cx="1117" cy="263" r="4"/><circle cx="1101" cy="281" r="4"/><circle cx="1084" cy="299" r="4"/><circle cx="1051" cy="334" r="4"/><circle cx="1152" cy="291" r="3"/><circle cx="1119" cy="328" r="3"/><circle cx="1085" cy="363" r="3"/><circle cx="1051" cy="399" r="4"/><circle cx="1022" cy="284" r="2"/></g>
    <g fill="#fff" stroke="#108080" stroke-width="1.200"><circle cx="1107" cy="274" r="3"/><circle cx="1014" cy="282" r="2.500"/><circle cx="1028" cy="283" r="2.500"/><circle cx="1143" cy="291" r="2.500"/><circle cx="1121" cy="322" r="2.500"/><circle cx="1112" cy="332" r="2.500"/><circle cx="1088" cy="358" r="2.500"/><circle cx="1079" cy="368" r="2.500"/><circle cx="1043" cy="398" r="2.500"/></g>
   </svg>
  </div>
  <div class="tablepanel">
   <div class="ptitle"><svg width="8" height="10" viewBox="0 0 8 10"><path d="M2.500.500h3v5h-3zM4.500.500v5M0 6h8M4 6v3" stroke="#555" fill="none"/></svg><svg width="10" height="10" viewBox="0 0 10 10"><path d="M1 1l8 8M9 1L1 9" stroke="#666" stroke-width="1.500"/></svg></div>
   <div class="ptools"></div>
   <div class="sheet">
    <table>
     <colgroup><col class="c0"><col class="c1"><col class="c2"><col class="c3"><col class="c4"><col class="c5"><col class="c5"><col class="c5"><col></colgroup>
     <thead>
      <tr class="letters"><th></th><th></th><th></th><th></th><th></th><th></th><th></th><th></th><th class="sel">H</th></tr>
      <tr class="names"><th></th><th></th><th></th><th></th><th></th><th></th><th></th><th></th><th>Comment</th></tr>
     </thead>
     <tbody>
      <tr class="focus"><th>LC1</th><td>Self-weight</td><td class="k"><input type="checkbox" checked></td><td><b class="t g">G</b>Permanent</td><td class="k"><input type="checkbox" checked></td><td></td><td></td><td></td><td></td></tr>
      <tr><th>LC2</th><td>Prestress</td><td class="k"><input type="checkbox" checked></td><td><b class="t p">P</b>Prestress</td><td class="k"><input type="checkbox"></td><td class="d"></td><td class="d"></td><td class="d"></td><td></td></tr>
      <tr><th>LC3</th><td>Imposed load</td><td class="k"><input type="checkbox" checked></td><td><b class="t qi">Qi C</b>Imposed - Category C: Congregation are</td><td class="k"><input type="checkbox"></td><td class="d"></td><td class="d"></td><td class="d"></td><td></td></tr>
      <tr><th>LC4</th><td>Snow</td><td class="k"><input type="checkbox" checked></td><td><b class="t qs">Qs</b>Snow (H ≤ 1000 m a.s.l.)</td><td class="k"><input type="checkbox"></td><td class="d"></td><td class="d"></td><td class="d"></td><td></td></tr>
      <tr><th>LC5</th><td>Wind X</td><td class="k"><input type="checkbox" checked></td><td><b class="t qw">Qw</b>Wind</td><td class="k"><input type="checkbox"></td><td class="d"></td><td class="d"></td><td class="d"></td><td></td></tr>
      <tr><th>LC6</th><td>Wind Y</td><td class="k"><input type="checkbox" checked></td><td><b class="t qw">Qw</b>Wind</td><td class="k"><input type="checkbox"></td><td class="d"></td><td class="d"></td><td class="d"></td><td></td></tr>
      <tr><th>LC7</th><td>Temperature</td><td class="k"><input type="checkbox" checked></td><td><b class="t qt">Qt</b>Temperature (non fire)</td><td class="k"><input type="checkbox"></td><td class="d"></td><td class="d"></td><td class="d"></td><td></td></tr>
      <tr><th>LC8</th><td>Impact</td><td class="k"><input type="checkbox" checked></td><td><b class="t a">A</b>Accidental</td><td class="k"><input type="checkbox"></td><td class="d"></td><td class="d"></td><td class="d"></td><td></td></tr>
      <tr><th>LC9</th><td>Seismic X</td><td class="k"><input type="checkbox" checked></td><td><b class="t ae">AE</b>Earthquake</td><td class="k"><input type="checkbox" checked></td><td class="n">0.100</td><td class="n">0.000</td><td class="n">0.000</td><td></td></tr>
      <tr><th>LC10</th><td>Seismic Y</td><td class="k"><input type="checkbox" checked></td><td><b class="t ae">AE</b>Earthquake</td><td class="k"><input type="checkbox" checked></td><td class="n">0.000</td><td class="n">0.100</td><td class="n">0.000</td><td></td></tr>
      <tr><th>LC11</th><td>Imperfection X</td><td class="k"><input type="checkbox" checked></td><td><b class="t imp">Imp</b>Imperfection</td><td class="k"><input type="checkbox"></td><td class="d"></td><td class="d"></td><td class="d"></td><td></td></tr>
      <tr><th>LC12</th><td>Imperfection Y</td><td class="k"><input type="checkbox" checked></td><td><b class="t imp">Imp</b>Imperfection</td><td class="k"><input type="checkbox"></td><td class="d"></td><td class="d"></td><td class="d"></td><td></td></tr>
      <tr><th>LC13</th><td></td><td class="d"></td><td class="d"></td><td class="d"></td><td class="d"></td><td class="d"></td><td class="d"></td><td class="d"></td></tr>
     </tbody>
    </table>
    <div class="vscroll tv"><svg width="10" height="8"><use href="#chevU"/></svg><i></i><svg width="10" height="8"><use href="#chevD"/></svg></div>
   </div>
   <div class="sheettabs"><button class="cur">Load Cases</button><button>Load Combinations</button><button>Result Combinations</button></div>
   <div class="pfoot"></div>
  </div>
 </section>
</main>

<footer class="statusbar">
 <div class="toggles"><button class="s1">SNAP</button><button class="up s1">GRID</button><button class="s3">CARTES</button><button class="s2">OSNAP</button><button class="s2">GLINES</button><button class="s0">DXF</button></div>
 <i class="w1"></i><i class="w2"></i><i class="w3"></i><i class="w3"></i><i class="w3"></i>
</footer>
</div>

<div class="dialog" role="dialog" aria-labelledby="dlg">
 <div class="dtitle"><h2 id="dlg">Edit Load Cases and Combinations</h2><button><svg width="12" height="12"><path d="M1 1l10 10M11 1L1 11" stroke="#111" stroke-width="1.200"/></svg></button></div>
 <div class="tabs"><button class="ta">Load Cases</button><button class="cur tb">Load Combinations</button><button class="tc">Result Combinations</button></div>
 <div class="page">
  <section class="group existing">
   <h3>Existing Load Combinations</h3>
   <div class="colist">
    <table><tr><td><i class="sw"></i>CO1</td><td>LC1 + LC2 + LC3 + LC4 + LC5 + LC7 +</td></tr><tr class="rest"><td></td><td></td></tr></table>
    <div class="hscroll co-h"><svg width="8" height="10"><use href="#chevL"/></svg><i></i><svg width="8" height="10"><use href="#chevR"/></svg></div>
   </div>
   <div class="tools">
    <button class="ib"><svg viewBox="0 0 16 16"><path d="M4.500 6.500h11v8h-11z" fill="#f3ead2" stroke="#333"/><path d="M4 7h12" stroke="#2858b0" stroke-width="2.500"/><use href="#star" width="14" height="14"/></svg></button>
    <button class="ib"><svg viewBox="0 0 16 16"><path d="M.500.500h10v8h-10z" fill="#f3ead2" stroke="#333"/><path d="M0 1h11" stroke="#2858b0" stroke-width="2.500"/><path d="M5.500 6.500h10v8h-10z" fill="#f3ead2" stroke="#333"/><path d="M5 7h11" stroke="#2858b0" stroke-width="2.500"/></svg></button>
    <button class="ib"><svg viewBox="0 0 16 16"><path d="M1 6l2-5 2 5M2 4h2" stroke="#222" fill="none" stroke-width="1.200"/><path d="M3 7q0 6 7 6M8 10l3 3-3 2" stroke="#5478b4" fill="none" stroke-width="2"/><path d="M12 9h2q2 0 1 3 2 3-1 3h-2zM12 12h3" stroke="#222" fill="none" stroke-width="1.300"/></svg></button>
    <div class="combo all1"><i class="sw"></i><select aria-label="Filter"><option>All (1)</option></select><svg width="10" height="6"><use href="#chev"/></svg></div>
    <button class="ib"><svg viewBox="0 0 16 16"><path d="M2 2l12 13M14 1L2 14" stroke="#400" stroke-width="3.500"/><path d="M2 2l12 13M14 1L2 14" stroke="#e02020" stroke-width="2.400"/></svg></button>
   </div>
  </section>
  <div class="right">
   <div class="toprow">
    <section class="group g1"><h3><label for="cono">CO No.</label></h3><div class="gb"><input id="cono" value="1"></div></section>
    <section class="group g2"><h3><label for="desc">Load Combination Description</label></h3><div class="gb"><div class="combo mini"><i class="sw"></i><svg width="10" height="6"><use href="#chev"/></svg></div><div class="combo wide"><select id="desc"><option></option></select><svg width="10" height="6"><use href="#chev"/></svg></div></div></section>
    <section class="group g3"><h3><label for="solve">To Solve</label></h3><div class="gb"><input id="solve" type="checkbox" checked></div></section>
   </div>
   <div class="tabs sub"><button class="cur td">General</button><button class="te">Calculation Parameters</button></div>
   <div class="subpage">
    <div class="lists">
     <section class="group left">
      <h3>Existing Load Cases</h3>
      <table class="lc">
       <tr class="s"><td><b class="t g">G</b>LC1</td><td class="o">Self-weight</td></tr>
       <tr class="h"><td><b class="t p">P</b>LC2</td><td>Prestress</td></tr>
       <tr><td><b class="t qi">Qi C</b>LC3</td><td>Imposed load</td></tr>
       <tr><td><b class="t qs">Qs</b>LC4</td><td>Snow</td></tr>
       <tr><td><b class="t qw">Qw</b>LC5</td><td>Wind X</td></tr>
       <tr><td><b class="t qw">Qw</b>LC6</td><td>Wind Y</td></tr>
       <tr><td><b class="t qt">Qt</b>LC7</td><td>Temperature</td></tr>
       <tr><td><b class="t a">A</b>LC8</td><td>Impact</td></tr>
       <tr><td><b class="t ae">AE</b>LC9</td><td>Seismic X</td></tr>
       <tr><td><b class="t ae">AE</b>LC10</td><td>Seismic Y</td></tr>
       <tr><td><b class="t imp">Imp</b>LC11</td><td>Imperfection X</td></tr>
       <tr><td><b class="t imp">Imp</b>LC12</td><td>Imperfection Y</td></tr>
       <tr class="rest"><td></td><td></td></tr>
      </table>
      <div class="tools">
       <button class="ib"><svg viewBox="0 0 16 16"><path d="M3 3h10L9 8v6H7V8z" fill="#3c74c4" stroke="#2c4c84" stroke-width=".8"/></svg></button>
       <div class="combo all12"><i class="sw"></i><select aria-label="Filter"><option>All (12)</option></select><svg width="10" height="6"><use href="#chev"/></svg></div>
       <button class="ib"><svg viewBox="0 0 16 16"><path d="M.500 1.500h5v5h-5zM.500 9.500h5v5h-5zM1 3l2 2 3-4M1 11l2 2 3-4" fill="#fff" stroke="#222"/><path d="M8 9l2 4 5-9" fill="none" stroke="#1aa838" stroke-width="2.200"/></svg></button>
       <button class="ib"><svg viewBox="0 0 16 16"><path d="M.500 1.500h5v5h-5zM.500 9.500h5v5h-5zM1 3l2 2 3-4" fill="#fff" stroke="#222"/><path d="M9 6V4h5v3M14 10v3H9v-3M8 5l2-3M15 12l-2 3" fill="none" stroke="#2a9440" stroke-width="1.800"/></svg></button>
      </div>
     </section>
     <div class="move">
      <button class="ib"><svg viewBox="0 0 16 16"><path d="M5 4l7 4-7 4 2-4z" fill="#e05050" stroke="#a03030" stroke-width=".8"/></svg></button>
      <button class="ib"><svg viewBox="0 0 16 16"><path d="M1 4l7 4-7 4 3-4zM8 4l7 4-7 4 3-4z" fill="#e05050" stroke="#a03030" stroke-width=".8"/></svg></button>
      <span></span>
      <button class="ib"><svg viewBox="0 0 16 16"><path d="M11 4L5 8l6 4V4z" fill="#f4b0b0" stroke="#b03030"/></svg></button>
      <button class="ib def"><svg viewBox="0 0 16 16"><path d="M8 4L2 8l6 4V4zM15 4L9 8l6 4V4z" fill="#f4b0b0" stroke="#b03030"/></svg></button>
     </div>
     <section class="group rightlist">
      <h3>Load Cases in Load Combination CO1</h3>
      <table class="lc f">
       <tr class="s"><td>1.00</td><td><b class="t g">G</b>LC1</td><td class="o">Self-weight</td></tr>
       <tr class="h"><td>1.00</td><td><b class="t p">P</b>LC2</td><td>Prestress</td></tr>
       <tr><td>1.00</td><td><b class="t qi">Qi C</b>LC3</td><td>Imposed load</td></tr>
       <tr><td>1.00</td><td><b class="t qs">Qs</b>LC4</td><td>Snow</td></tr>
       <tr><td>1.00</td><td><b class="t qw">Qw</b>LC5</td><td>Wind X</td></tr>
       <tr><td>1.00</td><td><b class="t qt">Qt</b>LC7</td><td>Temperature</td></tr>
       <tr><td>1.00</td><td><b class="t a">A</b>LC8</td><td>Impact</td></tr>
       <tr><td>1.00</td><td><b class="t ae">AE</b>LC9</td><td>Seismic X</td></tr>
       <tr><td>1.00</td><td><b class="t imp">Imp</b>LC11</td><td>Imperfection X</td></tr>
       <tr class="rest"><td></td><td></td><td></td></tr>
      </table>
      <div class="tools">
       <div class="combo factor"><select disabled aria-label="Factor"><option>1.00</option></select><svg width="10" height="6" opacity=".5"><use href="#chev"/></svg></div>
       <button class="ib off"><svg viewBox="0 0 16 16"><path d="M3 9l4 4 7-11" fill="none" stroke="#8e8e86" stroke-width="3"/></svg></button>
       <button class="ib one">1.0</button>
      </div>
     </section>
    </div>
    <div class="botrow">
     <section class="group g4"><h3><label for="cmt">Comment</label></h3><div class="gb"><div class="combo wide"><select id="cmt"><option></option></select><svg width="10" height="6"><use href="#chev"/></svg></div><button class="ib"><svg viewBox="0 0 16 16"><path d="M.500 2.500h9v7h-9zM3.500 5.500h9v6h-9zM6.500 8.500h9v6h-9z" fill="#efdfa8" stroke="#6d5f30"/></svg></button></div></section>
     <section class="group g5"><button class="ib"><svg viewBox="0 0 16 16"><path d="M1.500 1.500h12v12h-12z" fill="#f6f6ee" stroke="#445"/><path d="M1 2h13" stroke="#2858b0" stroke-width="2.500"/><path d="M3 7h6l6 0v5l-7 1-3-3z" fill="#b58c68" stroke="#443322" stroke-width=".7"/></svg></button><button class="ib"><svg viewBox="0 0 16 16"><path d="M1 1h11M1 4h9M1 7h4M1 10h4" stroke="#555"/><g transform="translate(4 3) scale(.75)"><use href="#lens" width="16" height="16"/></g></svg></button></section>
    </div>
   </div>
  </div>
 </div>
 <div class="dfoot">
  <button class="ib"><svg viewBox="0 0 16 16"><circle cx="8" cy="7.500" r="6.500" fill="#f4f6fc" stroke="#667"/><path d="M5.500 6q0-3 2.500-3t2.500 2.500Q10.500 7.500 8 9M8 11v2" stroke="#2a4a98" stroke-width="1.800" fill="none"/></svg></button>
  <button class="ib fo"><svg viewBox="0 0 16 16"><path d="M7 3q5-4 8 3v7" fill="#5c8cd4" stroke="#33558c"/><path d="M1 14V5h5l1 1h6v8z" fill="#e6d282" stroke="#6b5a20"/></svg></button>
  <button class="ib"><svg viewBox="0 0 16 16"><path d="M1 3h13v12H1z" fill="#5a62a4" stroke="#333a70"/><path d="M4 10h7v5H4z" fill="#e8e8f4"/><path d="M6.500.500h9v7h-9z" fill="#fff" stroke="#445"/><path d="M6 1h10" stroke="#334a80" stroke-width="2"/></svg></button>
  <button class="push ok">OK</button><button class="push">Cancel</button>
 </div>
 <svg class="sizegrip" width="12" height="12"><path d="M0 12L12 0M4 12l8-8M8 12l4-4" stroke="#999"/></svg>
 <svg class="pointer" width="70" height="70" viewBox="0 0 70 70"><path d="M51 3q4-4 7 0 4 3 0 7L37 38l9 7L5 60l12-42 9 8z" fill="#e94b45"/></svg>
</div>
</body>
</html>
```
FILE: styles.css
```
* { box-sizing: border-box; }
body { margin: 0; font: 12px/16px Roboto, "Noto Sans", sans-serif; color: #000; overflow: hidden; }
h1, h2, h3, ul { margin: 0; padding: 0; font-size: inherit; font-weight: normal; list-style: none; }
button { font: inherit; color: inherit; padding: 0; margin: 0; border: 0; background: none; }
select, input { font: inherit; color: inherit; margin: 0; }
i, b { font-style: normal; font-weight: normal; }
table { border-spacing: 0; }
.defs { display: none; }
.app { display: flex; flex-direction: column; height: 100vh; background: #cfd4de; }

/* window title and menu */
.titlebar { display: flex; align-items: center; gap: 5px; height: 23px; padding: 0 19px 0 2px; background: #fff; color: #8a8a8a; }
.winctl { margin-left: auto; display: flex; gap: 33px; }
.winctl svg { display: block; }
.menubar { display: flex; align-items: center; height: 24px; padding-left: 4px; color: #44484f; }
.menubar a { color: inherit; text-decoration: none; padding: 0 7px; }
.menubar .logo { margin: 0 3px 0 4px; }
.grip { width: 2px; height: 16px; background: repeating-linear-gradient(#a4a9b2 0 2px, transparent 2px 4px); }
.mdictl { margin-left: auto; padding: 4px 6px 0 0; }
.mdictl svg { display: block; }

/* toolbars */
.toolrow { display: flex; gap: 1px; height: 26px; padding-left: 1px; }
.bar { display: flex; align-items: center; height: 26px; padding: 1px 2px 0 3px; background: linear-gradient(#eaeef8, #dce0ea 60%, #c9ced9); border-bottom: 1px solid #a9aeb8; border-radius: 3px; }
.bar .grip { margin-right: 4px; }
.bar button { width: 22px; height: 22px; display: flex; align-items: center; justify-content: center; }
.bar button svg { width: 16px; height: 16px; flex: none; }
.bar button.split { width: 35px; justify-content: flex-start; padding-left: 5px; gap: 3px; }
.bar button svg.dd { width: 7px; height: 4px; }
.bar .on { background: #fdd595; border: 1px solid #c29450; }
.bar .sep { width: 8px; height: 16px; background: linear-gradient(90deg, transparent 3px, #a2a7b1 3px 4px, #fff 4px 5px, transparent 5px); }
.lcselect { display: flex; width: 216px; height: 22px; margin: 0 2px; background: #fff; }
.lcselect select { flex: 1; appearance: none; border: 0; background: none; padding: 0 3px; }
.lcselect span { width: 14px; margin: 1px; display: flex; align-items: center; justify-content: center; background: #d8dce4; }

/* navigator */
.workspace { flex: 1; display: flex; min-height: 0; }
.navigator { width: 211px; display: flex; flex-direction: column; }
.navigator h2 { height: 21px; padding: 2px 4px; width: 207px; background: #b8bfca; color: #4c5058; }
.navframe { flex: 1; min-height: 0; width: 205px; margin: 2px 0 0 2px; padding: 1px; border: 1px solid #7c8088; background: #fff; display: flex; flex-direction: column; }
.navtree { flex: 1; min-height: 0; display: flex; }
.treeview { flex: 1; min-width: 0; overflow: hidden; background: linear-gradient(90deg, #f6f6e6, #fcfcf6 20px); display: flex; flex-direction: column; }
.root svg { display: block; }
.treeview ul { margin: auto 0 -7px 30px; border-left: 1px dotted #888; padding-left: 18px; font: 12px/16px "Open Sans", "Noto Sans", sans-serif; }
.treeview li { display: flex; align-items: center; height: 18px; white-space: nowrap; border-left: 1px dotted #888; }
.treeview li::before { content: ""; width: 10px; flex: none; border-top: 1px dotted #888; }
.treeview li svg { width: 15px; height: 15px; flex: none; margin-right: 6px; }
.treeview text { font: bold 6px "Liberation Sans", sans-serif; text-anchor: middle; }
.vscroll { width: 17px; background: #f0f0f0; display: flex; flex-direction: column; align-items: center; justify-content: flex-end; padding: 4px 0; }
.hscroll { height: 16px; background: #f0f0f0; display: flex; align-items: center; padding: 0 5px; }
.hscroll i { height: 16px; background: #cdcdcd; margin: 0 auto 0 4px; }
.nav-h { margin-bottom: 1px; padding-right: 21px; }
.nav-h i { width: 42px; }
.navtabs { display: flex; height: 24px; padding: 2px 0 2px 4px; gap: 6px; color: #4c5058; }
.navtabs button { display: flex; align-items: center; gap: 2px; padding-right: 3px; }
.navtabs .cur { background: #f2f6fa; border-radius: 2px; }

/* model view */
.content { flex: 1; min-width: 0; display: flex; flex-direction: column; }
.canvas { flex: 1; position: relative; overflow: hidden; background: #fff; border-top: 2px solid #6c6c6c; border-bottom: 1px solid #d8d8d8; }
.model { position: absolute; left: 789px; top: 109px; }

/* table panel */
.ptitle { height: 26px; padding: 0 5px 0 0; border-top: 6px solid #cfd4de; background: #b8bfca; display: flex; justify-content: flex-end; align-items: center; gap: 8px; }
.ptools { height: 25px; background: linear-gradient(#ebeff9, #cdd2da); }
.sheet { display: flex; border: 2px solid #6c6c6c; border-right-color: #888; background: #f0f0f0; padding: 1px 1px 6px 0; }
.sheet table { flex: 1; table-layout: fixed; width: 100%; font: 12px/14px "Liberation Sans", sans-serif; border-left: 2px solid #f0f0f0; }
.c0 { width: 45px; } .c1 { width: 192px; } .c2 { width: 72px; } .c3 { width: 222px; } .c4 { width: 54px; } .c5 { width: 60px; }
.sheet th { font-weight: normal; padding: 0; }
.sheet td { height: 16px; padding: 0 0 0 4px; background: #fff; border-right: 1px solid #a0a0a0; border-bottom: 1px solid #a0a0a0; overflow: hidden; white-space: nowrap; font-size: 11px; }
.sheet tbody th { height: 16px; background: #e1e1e1; border: 1px solid #fff; border-right: 1px solid #888; border-bottom: 1px solid #777; }
.sheet .letters th { height: 15px; line-height: 13px; border-bottom: 1px solid #666; }
.sheet .letters .sel { background: #0078d7; color: #fff; border: 1px solid #555; }
.sheet .names th { height: 32px; border-right: 1px solid #a0a0a0; border-bottom: 1px solid #a0a0a0; vertical-align: bottom; padding-bottom: 2px; font-size: 11px; }
.sheet .focus td:last-child { outline: 1px dotted #000; outline-offset: -2px; }
.sheet td.d { background: #f0f0f0; }
.sheet td.n { text-align: right; font-size: 12px; padding-right: 3px; }
.sheet td.k { padding: 0; text-align: center; }
.sheet input { appearance: none; display: block; margin: 0 auto; width: 11px; height: 11px; border: 1px solid #000; border-width: 1px 2px 2px 1px; background: #fff; }
.sheet input:checked { background: url("data:image/svg+xml,%3Csvg xmlns='http://www.w3.org/2000/svg' viewBox='0 0 8 8'%3E%3Cpath d='M1 4l2 2 4-5' fill='none' stroke='black' stroke-width='2'/%3E%3C/svg%3E"); }
.tv { width: 16px; margin-left: 1px; padding: 6px 0 5px; justify-content: space-between; }
.tv i { flex: 1; align-self: stretch; margin: 4px 0 7px; background: #cdcdcd; }
.sheettabs { display: flex; height: 17px; padding-left: 1px; background: #f0f0f0; font: 11px/15px Roboto, sans-serif; border-bottom: 1px solid #d6d6d6; }
.sheettabs button { padding: 1px 3px 0; border: 1px solid #777; border-top: 0; border-radius: 0 0 5px 5px; margin-left: 1px; white-space: nowrap; }
.sheettabs .cur { background: #fff; margin: -2px 0 0; padding: 2px 3px 0; }
.pfoot { height: 18px; background: #f0f0f0; border-bottom: 1px solid #a0a0a0; }

/* status bar */
.statusbar { height: 21px; display: flex; justify-content: flex-end; background: linear-gradient(#d6d9e0, #aab0ba 50%, #b8bcc6); font: 12px/16px "Liberation Sans", sans-serif; color: #222; }
.toggles { display: flex; gap: 2px; padding-top: 1px; }
.toggles button { border: 1px solid #111; border-right-color: #fff; border-bottom-color: #fff; white-space: nowrap; }
.toggles .up { border-color: #fff #999 #999 #fff; }
.s0 { width: 28px; } .s1 { width: 35px; } .s2 { width: 44px; } .s3 { width: 50px; }
.statusbar > i { border-left: 1px solid #8e939c; margin-top: 2px; }
.w1 { width: 189px; } .w2 { width: 88px; } .w3 { width: 74px; }

/* load case type swatches */
.t { display: inline-block; width: 25px; height: 12px; margin-right: 5px; color: #fff; text-align: center; font: 11px/12px "Noto Sans", sans-serif; vertical-align: top; white-space: nowrap; }
.g { background: #000; } .p { background: #c8a000; } .qi { background: #c0504d; } .qs { background: #9bbb59; color: #000; }
.qw { background: #00b050; } .qt { background: #d03020; } .a { background: #34a8c8; } .ae { background: #9c561c; } .imp { background: #1f4e99; }
.sheet .t { margin-left: -3px; margin-top: 1px; }

/* dialog window */
.dialog { position: absolute; left: 28px; top: 102px; width: 973px; padding: 0 7px 0 6px; background: #f0f0f0; border: 1px solid #6a6a6a; box-shadow: 0 4px 16px rgba(0,0,0,.45); font: 11px/14px Roboto, sans-serif; }
.dtitle { display: flex; align-items: center; justify-content: space-between; height: 31px; margin: 0 -7px 7px -6px; padding: 0 9px 0 8px; background: #fff; font: 12px/16px Roboto, sans-serif; }
.tabs { display: flex; align-items: flex-end; height: 21px; padding-left: 1px; position: relative; margin-bottom: -1px; }
.tabs button { height: 19px; padding-top: 1px; border: 1px solid #d9d9d9; border-bottom: 0; white-space: nowrap; }
.tabs .cur { height: 21px; background: #fff; padding: 0 0 3px; }
.ta { width: 66px; } .tb { width: 105px; } .tc { width: 105px; } .td { width: 52px; } .te { width: 119px; }
.sub { padding-left: 0; }
.page { display: flex; gap: 7px; padding: 8px 8px 8px; background: #fff; border: 1px solid #d9d9d9; }
.group { display: flex; flex-direction: column; background: #f0f4fa; border-right: 1px solid #a8a8ec; border-bottom: 1px solid #a8a8ec; clip-path: polygon(0 0, calc(100% - 10px) 0, 100% 11px, 100% 100%, 0 100%); }
.group h3 { height: 16px; padding: 2px 2px 0; background: #dce6f4; color: #1f4a78; }
.gb { display: flex; gap: 7px; padding: 3px 4px 4px 2px; border-top: 1px solid #fff; border-left: 1px solid #dce6f4; }
.gb input:not([type]) { width: 46px; height: 20px; border: 1px solid #6e6e6e; text-align: right; padding: 0 6px; font-size: 12px; }
.gb input[type=checkbox] { width: 13px; height: 13px; margin: 4px 0 3px; appearance: none; border: 1px solid #222; background: #fff url("data:image/svg+xml,%3Csvg xmlns='http://www.w3.org/2000/svg' viewBox='0 0 11 11'%3E%3Cpath d='M1 5l3 3 6-6' fill='none' stroke='black' stroke-width='1.300'/%3E%3C/svg%3E"); }
.existing { width: 270px; margin-bottom: 2px; }
.colist { flex: 1; display: flex; flex-direction: column; border-top: 1px solid #888; border-left: 1px solid #888; margin-right: 1px; background: #fff; font-family: "Noto Sans", sans-serif; }
.colist table { flex: 1; display: flex; flex-direction: column; }
.colist tbody { display: flex; flex-direction: column; flex: 1; }
.colist tr { display: flex; height: 19px; background: #0078d7; color: #fff; }
.colist tr.rest { flex: 1; background: #fff; }
.colist td { padding: 3px 3px 2px; white-space: nowrap; overflow: hidden; }
.colist td:first-child { width: 77px; padding-left: 1px; border-right: 1px solid #fff; display: flex; gap: 4px; }
.colist td:last-child { flex: 1; }
.colist .rest td:first-child { border-right-color: #000; }
.sw { width: 25px; height: 12px; background: #d6d6d6; flex: none; align-self: center; }
.co-h i { width: 123px; }
.tools { display: flex; align-items: center; gap: 5px; height: 29px; padding: 0 3px; border-top: 1px solid #fff; border-left: 1px solid #dce6f4; }
.ib { width: 25px; height: 21px; flex: none; border: 1px solid #adadad; background: #e1e1e1; display: flex; align-items: center; justify-content: center; }
.ib svg { width: 16px; height: 16px; }
.combo { display: flex; align-items: center; height: 21px; background: #fff; border: 1px solid #6e6e6e; padding: 0 3px; }
.combo select { flex: 1; min-width: 0; appearance: none; border: 0; background: none; padding: 0 4px; font: 11px/14px "Noto Sans", sans-serif; }
.combo > svg { flex: none; }
.combo.wide { flex: 1; }
.combo.mini { width: 50px; justify-content: space-between; }
.all1 { width: 136px; margin: 0 auto 0 3px; }
.right { flex: 1; min-width: 0; display: flex; flex-direction: column; }
.toprow { display: flex; gap: 7px; height: 46px; margin-bottom: 8px; }
.g1 { width: 98px; } .g2 { width: 389px; } .g3 { width: 161px; }
.subpage { background: #fff; border: 1px solid #d9d9d9; border-left-color: #777; padding: 9px 4px 5px 5px; }
.lists { display: flex; justify-content: space-between; height: 484px; margin-bottom: 10px; }
.left { width: 251px; } .rightlist { width: 354px; }
.lc { flex: 1; display: flex; border-top: 1px solid #888; border-left: 1px solid #888; margin-right: 1px; background: #e8eeee; color: #111; font: 11px/16px "Liberation Sans", sans-serif; }
.lc tbody { flex: 1; display: flex; flex-direction: column; }
.lc tr { display: flex; height: 16px; background: #f0f0f0; }
.lc td { padding: 0 4px; }
.lc td:last-child { flex: 1; }
.lc td:nth-last-child(2) { width: 78px; padding-left: 1px; border-right: 1px solid #999; font: 11px/16px "Noto Sans", sans-serif; white-space: nowrap; }
.lc .t { margin-top: 2px; }
.f td:first-child { width: 54px; padding: 0 14px; text-align: center; background: #fff; border-right: 1px solid #999; font: 12px/16px "Liberation Sans", sans-serif; white-space: nowrap; }
.lc .h td { background: #dcdcdc; }
.lc.f .h td:first-child { background: #ececec; }
.lc .s td, .lc.f .s td:first-child { background: #0078d7; color: #fff; }
.lc .s td.o { color: #6d6d78; outline: 1px solid #e6823c; outline-offset: -1px; }
.lc.f .s td.o { outline: 1px dotted #111; }
.lc .rest { flex: 1; }
.lc .rest td, .lc.f .rest td:first-child { background: #e8eeee; }
.all12 { width: 156px; }
.left .tools { gap: 4px; }
.move { display: flex; flex-direction: column; gap: 5px; padding-top: 134px; }
.move span { height: 20px; }
.ib.def { border: 2px solid #0078d7; }
.factor { width: 54px; border-color: #ccc; color: #888; padding-left: 0; }
.ib.off { background: #ccc; border-color: #bfbfbf; }
.ib.one { background: #cce4f7; border-color: #005499; font: 11px/16px "Noto Sans", sans-serif; }
.botrow { display: flex; justify-content: space-between; height: 46px; }
.g4 { width: 487px; } .g4 .gb { gap: 3px; padding-right: 3px; }
.g5 { width: 157px; flex-direction: row; justify-content: flex-end; align-items: flex-end; gap: 5px; padding: 0 3px 4px 0; border-left: 1px solid #dce6f4; border-top: 1px solid #dce6f4; clip-path: none; }
.dfoot { display: flex; gap: 5px; padding: 11px 0 6px 1px; }
.fo { margin-left: 5px; }
.push { width: 73px; height: 21px; background: #e1e1e1; border: 1px solid #adadad; margin-left: 5px; }
.push.ok { margin-left: auto; border: 2px solid #0078d7; }
.sizegrip { position: absolute; right: 0; bottom: 0; }
.pointer { position: absolute; left: 719px; top: 542px; filter: drop-shadow(0 2px 2px rgba(0,0,0,.3)); }
```
